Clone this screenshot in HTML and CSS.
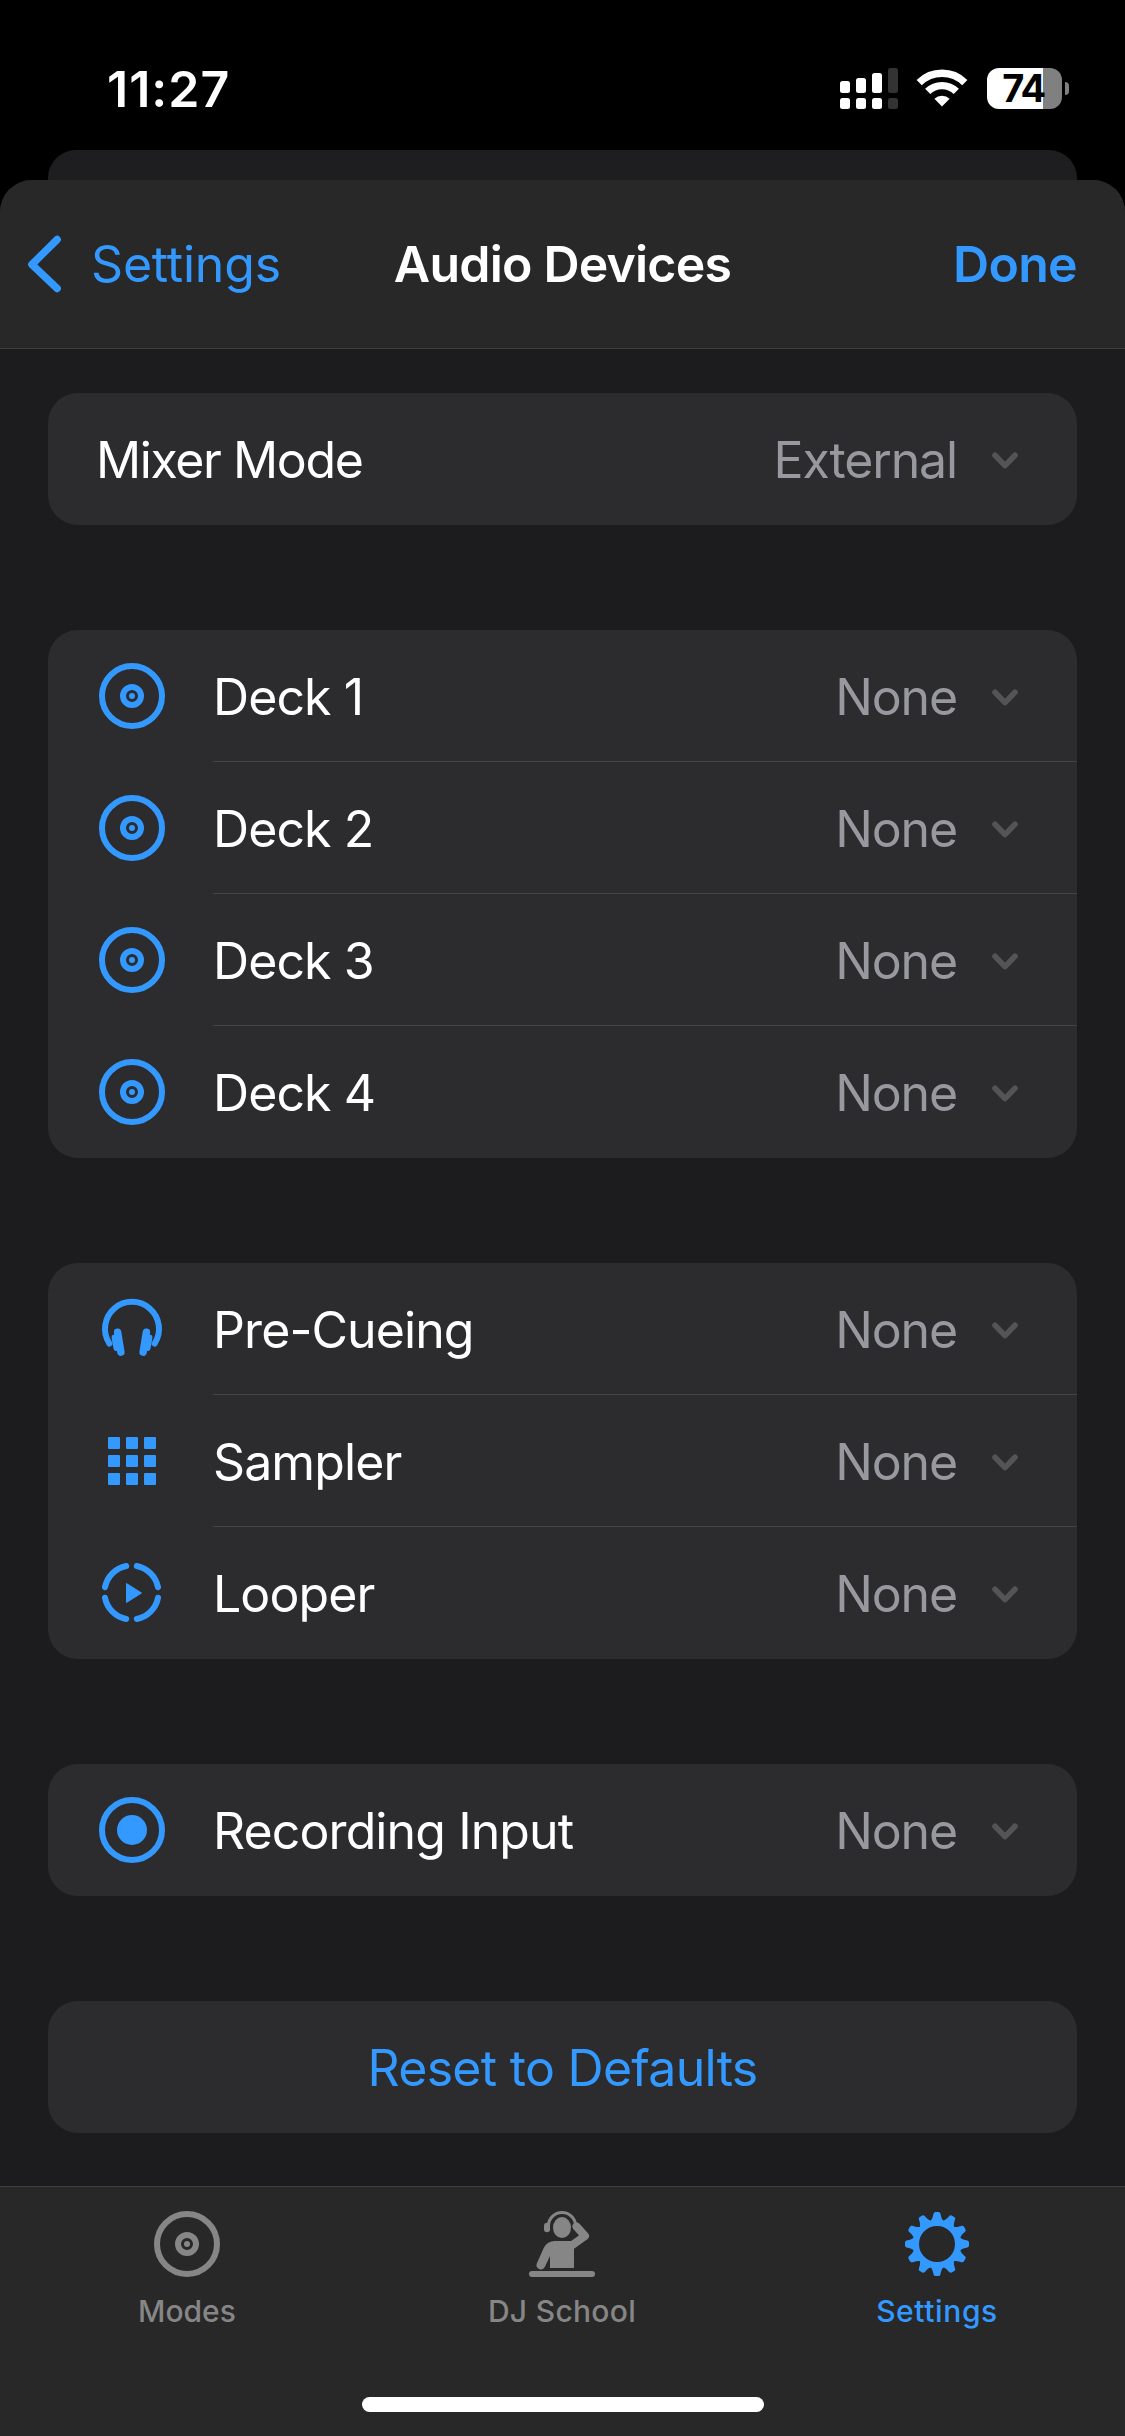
FILE: index.html
```html
<!DOCTYPE html>
<html lang="en">
<head>
<meta charset="utf-8">
<title>Audio Devices</title>
<link rel="stylesheet" href="styles.css">
</head>
<body>
<svg class="defs" aria-hidden="true">
  <symbol id="disc" viewBox="0 0 66 66"><g fill="none" stroke="currentColor" stroke-width="6"><circle cx="33" cy="33" r="30"/><circle cx="33" cy="33" r="9"/></g><circle cx="33" cy="33" r="3" fill="currentColor"/></symbol>
  <symbol id="down" viewBox="0 0 26 18"><path d="M3 3.2 13 13.6 23 3.2" fill="none" stroke="currentColor" stroke-width="5.6" stroke-linecap="round" stroke-linejoin="round"/></symbol>
  <symbol id="phones" viewBox="0 0 66 66"><path d="M10.4 47.6 A27 27 0 1 1 55.6 47.6" fill="none" stroke="currentColor" stroke-width="6" stroke-linecap="round"/><g stroke="currentColor" stroke-linecap="round" fill="none"><path d="M18.6 36.2 21.9 56.2M47.4 36.2 44.1 56.2" stroke-width="7.4"/><path d="M15.6 41.5 17.4 52M50.4 41.5 48.6 52" stroke-width="6"/></g></symbol>
  <symbol id="grid" viewBox="0 0 66 66"><g fill="currentColor"><rect x="9" y="9" width="12" height="12" rx="1"/><rect x="27" y="9" width="12" height="12" rx="1"/><rect x="45" y="9" width="12" height="12" rx="1"/><rect x="9" y="27" width="12" height="12" rx="1"/><rect x="27" y="27" width="12" height="12" rx="1"/><rect x="45" y="27" width="12" height="12" rx="1"/><rect x="9" y="45" width="12" height="12" rx="1"/><rect x="27" y="45" width="12" height="12" rx="1"/><rect x="45" y="45" width="12" height="12" rx="1"/></g></symbol>
  <symbol id="loop" viewBox="0 0 66 66"><path d="M6 27.2A27 27 0 0 1 27.2 6M37.8 6A27 27 0 0 1 59 27.2M59 37.8A27 27 0 0 1 37.8 59M27.2 59A27 27 0 0 1 6 37.8" fill="none" stroke="currentColor" stroke-width="6" stroke-linecap="round"/><path d="M27.5 23.5 42.5 33 27.5 42.5Z" fill="currentColor" stroke="currentColor" stroke-linejoin="round"/></symbol>
  <symbol id="record" viewBox="0 0 66 66"><circle cx="33" cy="33" r="30" fill="none" stroke="currentColor" stroke-width="6"/><circle cx="33" cy="33" r="15" fill="currentColor"/></symbol>
</svg>

<header class="status">
  <span class="time">11:27</span>
  <span class="indicators">
    <svg width="58" height="41" viewBox="0 0 58 41" fill="#fff"><rect y="13" width="10" height="12" rx="2.5"/><rect y="30" width="10" height="11" rx="2.5"/><rect x="16" y="10" width="10" height="15" rx="2.5"/><rect x="16" y="30" width="10" height="11" rx="2.5"/><rect x="32" y="5" width="10" height="20" rx="2.5"/><rect x="32" y="30" width="10" height="11" rx="2.5"/><g fill="#333"><rect x="48" width="10" height="25" rx="2.5"/><rect x="48" y="30" width="10" height="11" rx="2.5"/></g></svg>
    <svg class="wifi" width="52" height="38" viewBox="0 0 52 38"><g fill="none" stroke="#fff" stroke-width="7.4"><path d="M3.2 13.6A32.5 32.5 0 0 1 48.8 13.6"/><path d="M11.7 22.4A20.5 20.5 0 0 1 40.3 22.4"/></g><path d="M26 37.5 18.4 29.8A11 11 0 0 1 33.6 29.8Z" fill="#fff"/></svg>
    <span class="battery"><b>74</b></span><i class="nub"></i>
  </span>
</header>
<div class="behind"></div>

<main class="sheet">
  <nav class="navbar">
    <a class="back"><svg width="35" height="60" viewBox="0 0 35 60"><path d="M30.2 5.5 4.9 30.5 30.2 54.5" fill="none" stroke="currentColor" stroke-width="7.4" stroke-linecap="round" stroke-linejoin="round"/></svg><span>Settings</span></a>
    <h1>Audio Devices</h1>
    <a class="done">Done</a>
  </nav>

  <div class="content">
    <section class="card">
      <div class="row plain"><span class="label">Mixer Mode</span><span class="value">External</span><svg class="down"><use href="#down"/></svg></div>
    </section>
    <section class="card">
      <div class="row"><svg class="icon"><use href="#disc"/></svg><span class="label">Deck 1</span><span class="value">None</span><svg class="down"><use href="#down"/></svg></div>
      <div class="row"><svg class="icon"><use href="#disc"/></svg><span class="label">Deck 2</span><span class="value">None</span><svg class="down"><use href="#down"/></svg></div>
      <div class="row"><svg class="icon"><use href="#disc"/></svg><span class="label">Deck 3</span><span class="value">None</span><svg class="down"><use href="#down"/></svg></div>
      <div class="row"><svg class="icon"><use href="#disc"/></svg><span class="label">Deck 4</span><span class="value">None</span><svg class="down"><use href="#down"/></svg></div>
    </section>
    <section class="card">
      <div class="row"><svg class="icon"><use href="#phones"/></svg><span class="label">Pre-Cueing</span><span class="value">None</span><svg class="down"><use href="#down"/></svg></div>
      <div class="row"><svg class="icon"><use href="#grid"/></svg><span class="label">Sampler</span><span class="value">None</span><svg class="down"><use href="#down"/></svg></div>
      <div class="row"><svg class="icon"><use href="#loop"/></svg><span class="label">Looper</span><span class="value">None</span><svg class="down"><use href="#down"/></svg></div>
    </section>
    <section class="card">
      <div class="row"><svg class="icon"><use href="#record"/></svg><span class="label">Recording Input</span><span class="value">None</span><svg class="down"><use href="#down"/></svg></div>
    </section>
    <section class="card reset"><span>Reset to Defaults</span></section>
  </div>

  <footer class="tabs">
    <div class="tab"><svg class="icon"><use href="#disc"/></svg><span>Modes</span></div>
    <div class="tab school"><svg class="icon" viewBox="0 0 66 66"><path d="M19.5 14.5A13.5 13 0 0 1 46.5 14.5" fill="none" stroke="currentColor" stroke-width="3"/><rect x="15" y="11.8" width="6" height="9.4" rx="3" fill="currentColor"/><ellipse cx="33" cy="16.6" rx="9" ry="10.5" fill="currentColor"/><path d="M47.5 15.5 56 25 42 35" fill="none" stroke="currentColor" stroke-width="8" stroke-linecap="round" stroke-linejoin="round"/><path d="M21 57V45L15.8 56A4.4 4.4 0 0 1 7.8 52.4L14.7 37Q18.2 30 26 30H45V57Z" fill="currentColor"/><rect y="60" width="66" height="6" rx="3" fill="currentColor"/></svg><span>DJ School</span></div>
    <div class="tab active"><svg class="icon" viewBox="-33 -33 66 66"><circle r="21" fill="none" stroke="currentColor" stroke-width="6"/><g id="quarter"><path id="tooth" d="M-8-22.2C-4.6-23.5-4-28-3.4-30.4Q-3-32-1.5-32H1.5Q3-32 3.4-30.4C4-28 4.6-23.5 8-22.2Z" fill="currentColor"/><use href="#tooth" transform="rotate(30)"/><use href="#tooth" transform="rotate(60)"/></g><use href="#quarter" transform="rotate(90)"/><use href="#quarter" transform="rotate(180)"/><use href="#quarter" transform="rotate(270)"/></svg><span>Settings</span></div>
    <div class="home"></div>
  </footer>
</main>
</body>
</html>
```
FILE: styles.css
```css
* { box-sizing: border-box; }
body {
  margin: 0;
  width: 1125px;
  height: 2436px;
  display: flex;
  flex-direction: column;
  overflow: hidden;
  background: #000;
  color: #fff;
  font: 400 50px/60px Inter, "Liberation Sans", sans-serif;
}
svg { display: block; flex: none; }
.defs { position: absolute; width: 0; height: 0; }

.status {
  height: 150px;
  display: flex;
  justify-content: space-between;
  padding: 59px 56px 0 107px;
}
.time { font-weight: 600; letter-spacing: 1px; }
.indicators { display: flex; height: 41px; margin-top: 9px; }
.wifi { margin: 1px 19px 0 18px; }
.battery {
  width: 75px;
  height: 41px;
  border-radius: 12px;
  background: linear-gradient(90deg, #fff 56px, #808080 56px);
  color: #000;
  text-align: center;
}
.battery b { display: block; font-size: 38px; line-height: 41px; font-weight: 700; letter-spacing: -1.5px; margin-right: 2px; }
.nub { width: 4px; height: 13px; margin: 14px 0 0 3px; border-radius: 0 5px 5px 0; background: #808080; }

.behind { height: 30px; margin: 0 48px; border-radius: 28px 28px 0 0; background: #1e1e20; }
.sheet {
  height: 2256px;
  display: flex;
  flex-direction: column;
  background: #1c1c1e;
  border-radius: 32px 32px 0 0;
  overflow: hidden;
}
.navbar {
  height: 169px;
  display: grid;
  grid-template-columns: 1fr auto 1fr;
  padding: 0 48px;
  align-items: center;
  background: #282828;
  border-bottom: 1px solid #3f3f41;
}
.back, .done { color: #39f; }
.back { display: flex; align-items: center; gap: 29px; margin-left: -21px; letter-spacing: -0.2px; }
.done { justify-self: end; font-weight: 600; letter-spacing: -0.7px; }
h1 { margin: 0; font-size: 50px; font-weight: 600; letter-spacing: -0.8px; }

.content { height: 1837px; padding: 44px 48px 0; display: flex; flex-direction: column; gap: 105px; }
.card { border-radius: 30px; background: #2c2c2e; overflow: hidden; }
.row { height: 132px; display: flex; align-items: center; padding: 0 59px 0 51px; }
.icon { width: 66px; height: 66px; }
.row .icon { margin-right: 48px; color: #39f; }
.row:not(:last-child) {
  background: linear-gradient(#444446, #444446) 165px 131px / 100% 1px no-repeat;
}
.label, .value { padding-top: 2px; }
.label { flex: 1; letter-spacing: -0.9px; }
.plain { padding-left: 48px; }
.plain .label { letter-spacing: -1.4px; }
.value { color: #98989f; letter-spacing: -1.15px; }
.down { width: 26px; height: 18px; margin: 3px 0 0 35px; color: #545456; }
.reset { height: 132px; padding-top: 2px; display: flex; align-items: center; justify-content: center; color: #39f; letter-spacing: -0.72px; }

.tabs {
  height: 250px;
  display: grid;
  grid-template: 210px 39px / 374px 376px 374px;
  background: #282828;
  border-top: 1px solid #3f3f41;
}
.tab {
  display: flex;
  flex-direction: column;
  align-items: center;
  padding-top: 24px;
  gap: 16px;
  color: #868686;
  font-size: 30px;
  line-height: 36px;
  font-weight: 500;
}
.school { letter-spacing: 0.3px; }
.active { color: #39f; letter-spacing: 0.6px; }
.home { grid-column: 1 / -1; justify-self: center; width: 402px; height: 15px; margin-left: 2px; border-radius: 8px; background: #fff; }
```
